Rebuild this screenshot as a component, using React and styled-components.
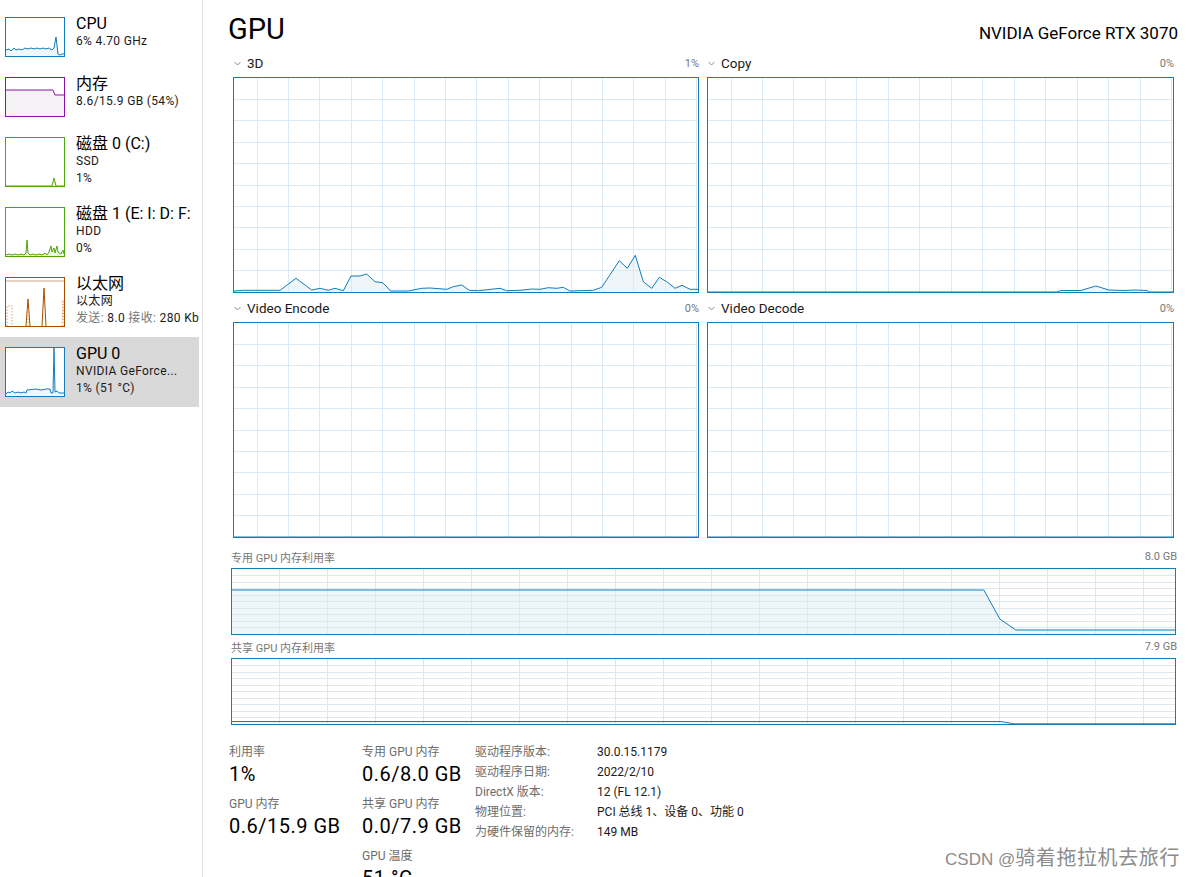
import React from 'react';
import styled, { createGlobalStyle } from 'styled-components';

const GlobalStyle = createGlobalStyle`
  html, body { margin: 0; padding: 0; background: #fff; }
  body {
    font-family: Roboto, "Noto Sans CJK SC", sans-serif;
    color: #1a1a1a;
    overflow: hidden;
  }
  * { box-sizing: border-box; }
`;

const Window = styled.div`
  position: relative;
  display: flex;
  width: 1195px;
  height: 877px;
  overflow: hidden;
  background: #fff;
`;

/* ---------- Sidebar ---------- */
const Sidebar = styled.nav`
  width: 203px;
  flex-shrink: 0;
  border-right: 1px solid #e3e3e3;
  padding: 7px 3px 0 0;
  display: flex;
  flex-direction: column;
  overflow: hidden;
`;

const Item = styled.div`
  display: flex;
  gap: 11px;
  padding: 10px 0 10px 5px;
  width: 199px;
  flex-shrink: 0;
  background: ${p => (p.$selected ? '#d9d9d9' : 'transparent')};
`;

const Thumb = styled.div`
  width: 60px;
  height: ${p => p.$h}px;
  flex-shrink: 0;
  border: 1px solid ${p => p.$color};
  background: #fff;
`;

const ItemText = styled.div`
  display: flex;
  flex-direction: column;
  margin-top: -3px;
  white-space: nowrap;
`;

const ItemTitle = styled.div`
  font-size: 16px;
  line-height: 19px;
  color: #000;
`;

const ItemSub = styled.div`
  font-size: 12px;
  line-height: 17px;
  letter-spacing: 0.35px;
  color: #1a1a1a;
`;

const Dim = styled.span`
  color: #777;
`;

/* ---------- Main ---------- */
const Main = styled.main`
  flex: 1;
  min-width: 0;
  padding: 9px 19px 0 25px;
  display: flex;
  flex-direction: column;
`;

const Header = styled.header`
  display: flex;
  justify-content: space-between;
  align-items: baseline;
  height: 43px;
  flex-shrink: 0;
`;

const Title = styled.h1`
  margin: 0;
  font-size: 29px;
  font-weight: 400;
  line-height: 40px;
  color: #000;
`;

const Model = styled.div`
  font-size: 17px;
  color: #000;
  margin-right: -2px;
`;

const TopGrid = styled.div`
  display: grid;
  grid-template-columns: 466px 467px;
  column-gap: 8px;
  row-gap: 4px;
  margin: 0 2px 0 5px;
  flex-shrink: 0;
`;

const ChartCell = styled.div`
  display: flex;
  flex-direction: column;
`;

const ChartHead = styled.div`
  height: 25px;
  flex-shrink: 0;
  padding: 0 0 3px 1px;
  display: flex;
  align-items: center;
  justify-content: space-between;
`;

const ChartName = styled.span`
  display: flex;
  align-items: center;
  gap: 6px;
  font-size: 13.5px;
  color: #1a1a1a;
`;

const Pct = styled.span`
  font-size: 11px;
  color: #777;
`;

const GraphBox = styled.div`
  height: ${p => p.$h}px;
  flex-shrink: 0;
  border: 1px solid #117dbb;
  background: #fff;
`;

const MemSection = styled.section`
  display: flex;
  flex-direction: column;
  flex-shrink: 0;
  margin: 7px 0 0 3px;
`;

const MemHead = styled.div`
  height: 23px;
  flex-shrink: 0;
  display: flex;
  align-items: center;
  justify-content: space-between;
  font-size: 11px;
  color: #777;
  margin-right: -1px;
`;

const Svg = styled.svg`
  display: block;
  width: 100%;
  height: 100%;
`;

/* ---------- Stats ---------- */
const Stats = styled.section`
  display: flex;
  align-items: flex-start;
  flex-shrink: 0;
  margin: 18px 0 0 1px;
`;

const StatCol = styled.div`
  width: ${p => p.$w}px;
  flex-shrink: 0;
  display: flex;
  flex-direction: column;
`;

const Stat = styled.div`
  display: flex;
  flex-direction: column;
  margin-bottom: 8px;
`;

const StatLabel = styled.div`
  font-size: 12px;
  line-height: 18px;
  color: #6d6d6d;
`;

const StatValue = styled.div`
  font-size: 20px;
  line-height: 26px;
  letter-spacing: 0.5px;
  color: #000;
`;

const InfoTable = styled.dl`
  margin: -1px 0 0;
  display: grid;
  grid-template-columns: 122px auto;
  grid-auto-rows: 20px;
  align-content: start;
  font-size: 12px;
  line-height: 20px;
  white-space: nowrap;
`;

const InfoKey = styled.dt`
  color: #6d6d6d;
`;

const InfoVal = styled.dd`
  margin: 0;
  color: #1a1a1a;
`;

const Watermark = styled.div`
  position: absolute;
  right: 15px;
  bottom: 5px;
  line-height: 24px;
  color: #8c8c8c;
  text-shadow: 0 0 1px #fff;
  white-space: nowrap;
`;

const WmLatin = styled.span`
  font-family: "Liberation Sans", sans-serif;
  font-size: 17px;
`;

const WmCjk = styled.span`
  font-family: "Noto Sans CJK SC", sans-serif;
  font-size: 20px;
  letter-spacing: 0.6px;
`;

/* ---------- Drawings ---------- */
const Chevron = () => (
  <svg width="7" height="5" viewBox="0 0 7 5">
    <polyline points="0.5,1 3.5,4 6.5,1" fill="none" stroke="#8a8a8a" strokeWidth="1" />
  </svg>
);

function Graph({ w, h, step, offset, rows, line, fill = true, grid = '#d9eaf4' }) {
  const vs = [];
  for (let x = offset; x < w - 0.5; x += step) vs.push(x);
  const hs = [];
  for (let i = 1; i < rows; i++) hs.push((h * i) / rows);
  const pts = line.map(p => p.join(',')).join(' ');
  const poly = `0,${h} ${pts} ${w},${h}`;
  return (
    <Svg viewBox={`0 0 ${w} ${h}`} preserveAspectRatio="none">
      {fill && <polygon points={poly} fill="rgba(17,125,187,0.07)" />}
      {vs.map(x => (
        <line key={'v' + x} x1={x} x2={x} y1={0} y2={h} stroke={grid} strokeWidth="1"
          vectorEffect="non-scaling-stroke" shapeRendering="crispEdges" />
      ))}
      {hs.map(y => (
        <line key={'h' + y} x1={0} x2={w} y1={y} y2={y} stroke={grid} strokeWidth="1"
          vectorEffect="non-scaling-stroke" shapeRendering="crispEdges" />
      ))}
      <polyline points={pts} fill="none" stroke="#117dbb" strokeWidth="1"
        vectorEffect="non-scaling-stroke" strokeLinejoin="round" />
    </Svg>
  );
}

function Mini({ w = 58, h, color, fillColor, line, extra }) {
  const pts = line ? line.map(p => p.join(',')).join(' ') : '';
  return (
    <Svg viewBox={`0 0 ${w} ${h}`} preserveAspectRatio="none">
      {line && <polygon points={`0,${h} ${pts} ${w},${h}`} fill={fillColor} />}
      {line && <polyline points={pts} fill="none" stroke={color} strokeWidth="1" strokeLinejoin="round" />}
      {extra}
    </Svg>
  );
}

/* ---------- Data ---------- */
const d3 = [
  [0, 213], [9.3, 212.3], [46, 212.3], [62, 200.3], [77.7, 212], [86, 210.3], [94.3, 212.3],
  [101, 210.3], [109.3, 212.7], [117, 198], [126, 198], [132.7, 196], [141, 203.7], [148.7, 204.7],
  [156.7, 213], [174.3, 213], [187.7, 210.3], [196, 210], [212.7, 211.3], [219.3, 208.7],
  [227.7, 207], [235.3, 212.3], [244.3, 212.7], [266, 210.3], [272.7, 212.7], [286, 212.3],
  [297.7, 211], [306, 211.3], [314.3, 209.7], [322.7, 210.3], [329.3, 209.3], [336, 213],
  [359.3, 212.3], [367.7, 209.3], [385.3, 182.7], [393.3, 190.3], [401.3, 177.3], [409.3, 203.7],
  [417.7, 210.3], [425.3, 199.3], [432.7, 203.7], [441, 210.3], [448, 207.3], [456, 211.3], [464, 211.3],
];
const dCopy = [
  [0, 214], [348, 214], [352, 212.5], [372, 212.5], [387, 208], [400, 212], [415, 212.5],
  [425, 212], [438, 212.5], [440, 214], [465, 214],
];
const dFlat = [[0, 214], [465, 214]];
const dDedicated = [[0, 21], [751, 21], [767, 50], [783, 61], [942, 61]];
const dShared = [[0, 62.5], [768, 62.5], [781, 64.8], [942, 64.8]];

const cpuLine = [
  [0, 32], [3, 31], [5, 33], [8, 30], [10, 32], [13, 31], [16, 32], [19, 30], [22, 31], [25, 30],
  [28, 31], [31, 30], [34, 31], [37, 30], [40, 31], [43, 30], [46, 32], [48, 30], [50, 19],
  [52, 36], [54, 37], [56, 36], [58, 36],
];
const memLine = [[0, 12], [47, 12], [49, 17], [58, 17]];
const disk0Line = [[0, 48], [46, 48], [48, 40], [50, 48], [58, 48]];
const disk1Line = [
  [0, 47], [3, 46], [6, 47], [9, 46], [12, 47], [15, 46], [18, 47], [20, 45], [21, 32], [22, 45],
  [24, 47], [27, 46], [30, 47], [33, 46], [36, 47], [39, 45], [41, 47], [43, 44], [45, 38],
  [46, 44], [48, 40], [49, 45], [51, 38], [52, 44], [55, 46], [57, 42], [58, 46],
];
const gpuLine = [
  [0, 46], [2, 44], [4, 45], [6, 43], [9, 45], [12, 44], [15, 45], [18, 44], [20, 45], [21, 42],
  [30, 41], [35, 42], [40, 41], [44, 41], [45, 45], [47, 45], [48, 0], [49, 44], [51, 43],
  [53, 45], [58, 45],
];

const ethExtra = (
  <g fill="none" strokeWidth="1">
    <line x1="0" x2="58" y1="3" y2="3" stroke="#caa486" />
    <polyline points="1,48 1,28 6,28 6,48" stroke="#e0a070" strokeDasharray="1.5 1.5" />
    <polyline points="20,48 22,21 24,48" stroke="#a74f01" />
    <polyline points="22,48 22,30" stroke="#e0a070" strokeDasharray="1.5 1.5" />
    <polyline points="36,48 38,10 40,48" stroke="#a74f01" />
    <polyline points="56,48 57,22 58,48" stroke="#e0a070" strokeDasharray="1.5 1.5" />
  </g>
);

const Sidebar_ = () => (
  <Sidebar>
    <Item>
      <Thumb $h={40} $color="#117dbb">
        <Mini h={38} color="#117dbb" fillColor="#f1f6fa" line={cpuLine} />
      </Thumb>
      <ItemText>
        <ItemTitle>CPU</ItemTitle>
        <ItemSub>6% 4.70 GHz</ItemSub>
      </ItemText>
    </Item>
    <Item>
      <Thumb $h={40} $color="#8b12ae">
        <Mini h={38} color="#8b12ae" fillColor="#f4f2f4" line={memLine} />
      </Thumb>
      <ItemText>
        <ItemTitle>内存</ItemTitle>
        <ItemSub>8.6/15.9 GB (54%)</ItemSub>
      </ItemText>
    </Item>
    <Item>
      <Thumb $h={50} $color="#4da60c">
        <Mini h={48} color="#4da60c" fillColor="#eef6e8" line={disk0Line} />
      </Thumb>
      <ItemText>
        <ItemTitle>磁盘 0 (C:)</ItemTitle>
        <ItemSub>SSD</ItemSub>
        <ItemSub>1%</ItemSub>
      </ItemText>
    </Item>
    <Item>
      <Thumb $h={50} $color="#4da60c">
        <Mini h={48} color="#4da60c" fillColor="#eef6e8" line={disk1Line} />
      </Thumb>
      <ItemText>
        <ItemTitle>磁盘 1 (E: I: D: F:</ItemTitle>
        <ItemSub>HDD</ItemSub>
        <ItemSub>0%</ItemSub>
      </ItemText>
    </Item>
    <Item>
      <Thumb $h={50} $color="#a74f01">
        <Mini h={48} extra={ethExtra} />
      </Thumb>
      <ItemText>
        <ItemTitle>以太网</ItemTitle>
        <ItemSub>以太网</ItemSub>
        <ItemSub><Dim>发送:</Dim> 8.0 <Dim>接收:</Dim> 280 Kb</ItemSub>
      </ItemText>
    </Item>
    <Item $selected>
      <Thumb $h={50} $color="#117dbb">
        <Mini h={48} color="#117dbb" fillColor="#f1f6fa" line={gpuLine} />
      </Thumb>
      <ItemText>
        <ItemTitle>GPU 0</ItemTitle>
        <ItemSub>NVIDIA GeForce...</ItemSub>
        <ItemSub>1% (51 °C)</ItemSub>
      </ItemText>
    </Item>
  </Sidebar>
);

const engines = [
  { name: '3D', pct: '1%', data: d3 },
  { name: 'Copy', pct: '0%', data: dCopy },
  { name: 'Video Encode', pct: '0%', data: dFlat },
  { name: 'Video Decode', pct: '0%', data: dFlat },
];

const info = [
  ['驱动程序版本:', '30.0.15.1179'],
  ['驱动程序日期:', '2022/2/10'],
  ['DirectX 版本:', '12 (FL 12.1)'],
  ['物理位置:', 'PCI 总线 1、设备 0、功能 0'],
  ['为硬件保留的内存:', '149 MB'],
];

export default function App() {
  return (
    <Window>
      <GlobalStyle />
      <Sidebar_ />
      <Main>
        <Header>
          <Title>GPU</Title>
          <Model>NVIDIA GeForce RTX 3070</Model>
        </Header>

        <TopGrid>
          {engines.map(e => (
            <ChartCell key={e.name}>
              <ChartHead>
                <ChartName><Chevron />{e.name}</ChartName>
                <Pct>{e.pct}</Pct>
              </ChartHead>
              <GraphBox $h={216}>
                <Graph w={464} h={214} step={31.4} offset={23} rows={10} line={e.data} fill />
              </GraphBox>
            </ChartCell>
          ))}
        </TopGrid>

        <MemSection>
          <MemHead><span>专用 GPU 内存利用率</span><span>8.0 GB</span></MemHead>
          <GraphBox $h={67}>
            <Graph w={942} h={65} step={48} offset={47} rows={10} line={dDedicated} grid="#dde7f0" />
          </GraphBox>
          <MemHead><span>共享 GPU 内存利用率</span><span>7.9 GB</span></MemHead>
          <GraphBox $h={67}>
            <Graph w={942} h={65} step={48} offset={47} rows={10} line={dShared} grid="#dde7f0" />
          </GraphBox>
        </MemSection>

        <Stats>
          <StatCol $w={133}>
            <Stat><StatLabel>利用率</StatLabel><StatValue>1%</StatValue></Stat>
            <Stat><StatLabel>GPU 内存</StatLabel><StatValue>0.6/15.9 GB</StatValue></Stat>
          </StatCol>
          <StatCol $w={113}>
            <Stat><StatLabel>专用 GPU 内存</StatLabel><StatValue>0.6/8.0 GB</StatValue></Stat>
            <Stat><StatLabel>共享 GPU 内存</StatLabel><StatValue>0.0/7.9 GB</StatValue></Stat>
            <Stat><StatLabel>GPU 温度</StatLabel><StatValue>51 °C</StatValue></Stat>
          </StatCol>
          <InfoTable>
            {info.map(([k, v]) => (
              <React.Fragment key={k}>
                <InfoKey>{k}</InfoKey>
                <InfoVal>{v}</InfoVal>
              </React.Fragment>
            ))}
          </InfoTable>
        </Stats>
      </Main>
      <Watermark>
        <WmLatin>CSDN @</WmLatin><WmCjk>骑着拖拉机去旅行</WmCjk>
      </Watermark>
    </Window>
  );
}
